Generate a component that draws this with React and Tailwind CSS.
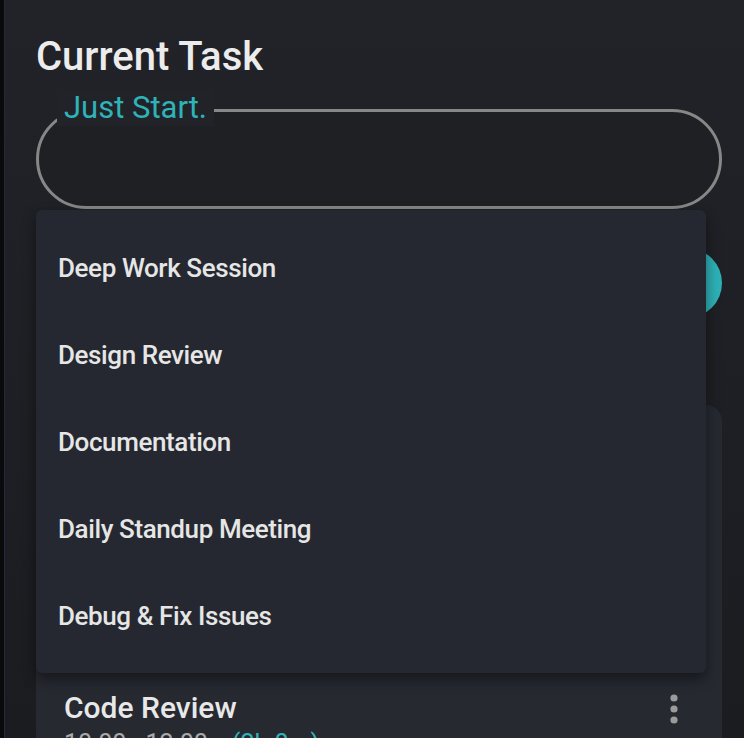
import React from "react";

const options = [
  "Deep Work Session",
  "Design Review",
  "Documentation",
  "Daily Standup Meeting",
  "Debug & Fix Issues",
];

const Dots = () => (
  <svg width="10" height="30" viewBox="0 0 10 30" className="text-[#9b9b9b]">
    <circle cx="5" cy="4" r="3.6" fill="currentColor" />
    <circle cx="5" cy="15" r="3.6" fill="currentColor" />
    <circle cx="5" cy="26" r="3.6" fill="currentColor" />
  </svg>
);

export default function App() {
  return (
    <div
      className="h-[738px] w-full overflow-hidden flex bg-gradient-to-b from-[#212329] to-[#1a1c20]"
      style={{ fontFamily: "Roboto, 'Noto Sans', sans-serif" }}
    >
      {/* left edge */}
      <div className="w-[5px] shrink-0 bg-[#0a0a0c] border-r border-[#25273a]" />

      <div className="relative flex-1 pl-[31px] pr-[22px] pt-[33px]">
        <h1 className="text-[40px] leading-[47px] font-medium text-[#ececec]">
          Current Task
        </h1>

        {/* text field */}
        <div className="relative mt-[29px] h-[100px] rounded-full border-[3px] border-[#878787] bg-[#1e2024]">
          <span className="absolute left-[18px] top-[-22px] px-[7px] bg-[#212329] text-[31px] leading-[36px] text-[#2fb3b8]">
            Just Start.
          </span>
        </div>

        {/* start button */}
        <button className="mt-[39px] h-[70px] w-full rounded-full bg-[#2eb1b6] text-[22px] font-medium text-[#10262a]">
          Start
        </button>

        {/* task list card */}
        <div className="mt-[87px] rounded-[16px] bg-[#262930] pl-[28px] pr-[43px] pt-[24px]">
          <div className="h-[40px] mb-[16px] text-[24px] font-medium text-[#ececec]">
            Today
          </div>
          <div className="h-[186px] border-b border-[#30333b]">
            <div className="text-[30px] leading-[36px] font-medium text-[#e8e8e8]">
              Planning
            </div>
          </div>
          <div className="flex items-start justify-between pt-[19px]">
            <div>
              <div className="text-[30px] leading-[36px] font-medium text-[#e8e8e8]">
                Code Review
              </div>
              <div className="mt-[4px] text-[25px] leading-[28px] text-[#a9a9a9]">
                10:00 - 12:00
                <span className="ml-[24px] text-[#2fb3b8]">(2h 0m)</span>
              </div>
            </div>
            <div className="pt-[4px]">
              <Dots />
            </div>
          </div>
        </div>

        {/* dropdown menu */}
        <div className="absolute left-[31px] top-[210px] w-[670px] rounded-[6px] bg-[#252830] py-[14px] shadow-[0_6px_14px_rgba(0,0,0,0.45)]">
          {options.map((o) => (
            <div
              key={o}
              className="h-[87px] flex items-center pl-[22px] text-[26px] leading-[30px] font-medium text-[#e6e6e6] tracking-[-0.4px]"
            >
              {o}
            </div>
          ))}
        </div>
      </div>
    </div>
  );
}
